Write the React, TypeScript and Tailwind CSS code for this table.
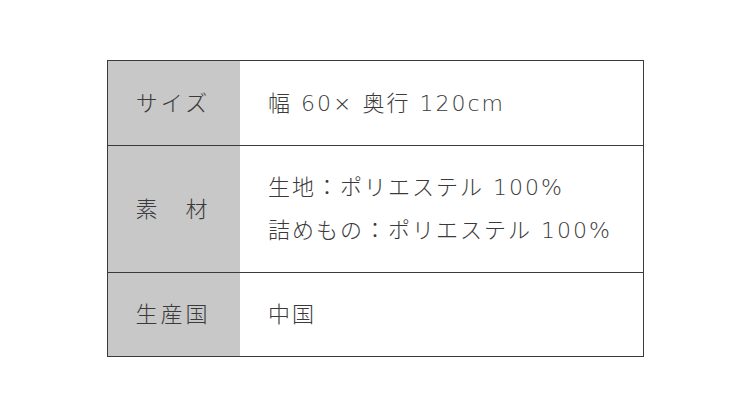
export default function App() {
  const rows = [
    { label: 'サイズ', lines: ['幅 60× 奥行 120cm'], h: 'h-[84px]' },
    { label: '素　材', lines: ['生地：ポリエステル 100%', '詰めもの：ポリエステル 100%'], h: 'h-[127px]' },
    { label: '生産国', lines: ['中国'], h: 'h-[84px]' },
  ]

  return (
    <div className="w-[750px] h-[417px] bg-white pt-[60px] pl-[107px] font-['DejaVu_Sans','Noto_Sans_CJK_JP',sans-serif] text-[#3a3a3a]">
      <div className="w-[537px] border border-[#3a3a3a]">
        {rows.map((row, i) => (
          <div key={row.label} className={`flex ${row.h} ${i > 0 ? 'border-t border-[#3a3a3a]' : ''}`}>
            <div className="w-[132px] shrink-0 bg-[#c8c8c8] flex items-center justify-center pr-[2px] text-[22px] font-light tracking-[3px]">
              {row.label}
            </div>
            <div className="flex flex-col justify-center gap-[8px] pl-[28px] text-[22px] font-light tracking-[2px]">
              {row.lines.map((l) => (
                <div key={l} className="leading-[35px]">{l}</div>
              ))}
            </div>
          </div>
        ))}
      </div>
    </div>
  )
}
